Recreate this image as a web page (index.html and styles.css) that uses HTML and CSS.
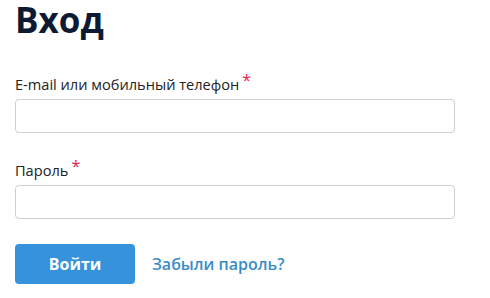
FILE: index.html
```html
<!DOCTYPE html>
<html lang="ru">
<head>
<meta charset="utf-8">
<link rel="stylesheet" href="styles.css">
</head>
<body>
<div class="page">
  <h1 class="title">Вход</h1>
  <form class="form">
    <div class="field">
      <label class="label">E-mail или мобильный телефон<span class="req">*</span></label>
      <input class="input" type="text">
    </div>
    <div class="field">
      <label class="label">Пароль<span class="req">*</span></label>
      <input class="input" type="password">
    </div>
    <div class="actions">
      <button class="btn" type="button">Войти</button>
      <a class="link" href="#">Забыли пароль?</a>
    </div>
  </form>
</div>
</body>
</html>
```

FILE: styles.css
```css
html, body {
  margin: 0;
  padding: 0;
  background: #fff;
}
body {
  font-family: "Open Sans", "Liberation Sans", sans-serif;
}
.page {
  padding: 0 35px 0 15px;
}
.title {
  margin: 0;
  font-size: 35px;
  line-height: 40px;
  font-weight: 700;
  color: #0c1a33;
}
.form {
  margin-top: 34px;
}
.field {
  display: flex;
  flex-direction: column;
  margin-bottom: 27px;
}
.label {
  font-size: 14.6px;
  line-height: 20px;
  color: #222;
  margin-bottom: 5px;
}
.req {
  color: #e0234f;
  font-size: 16px;
  margin-left: 3px;
  position: relative;
  top: -4px;
}
.input {
  box-sizing: border-box;
  height: 34px;
  border: 1px solid #cfcfcf;
  border-radius: 4px;
  background: #fff;
  margin: 0;
}
.actions {
  display: flex;
  align-items: center;
  gap: 17px;
  margin-top: -2px;
}
.btn {
  width: 120px;
  height: 40px;
  border: 0;
  border-radius: 4px;
  background: #3592db;
  color: #fff;
  font-family: inherit;
  font-size: 16px;
  font-weight: 700;
}
.link {
  color: #3a8cc8;
  font-size: 16px;
  font-weight: 600;
  text-decoration: none;
}
```
